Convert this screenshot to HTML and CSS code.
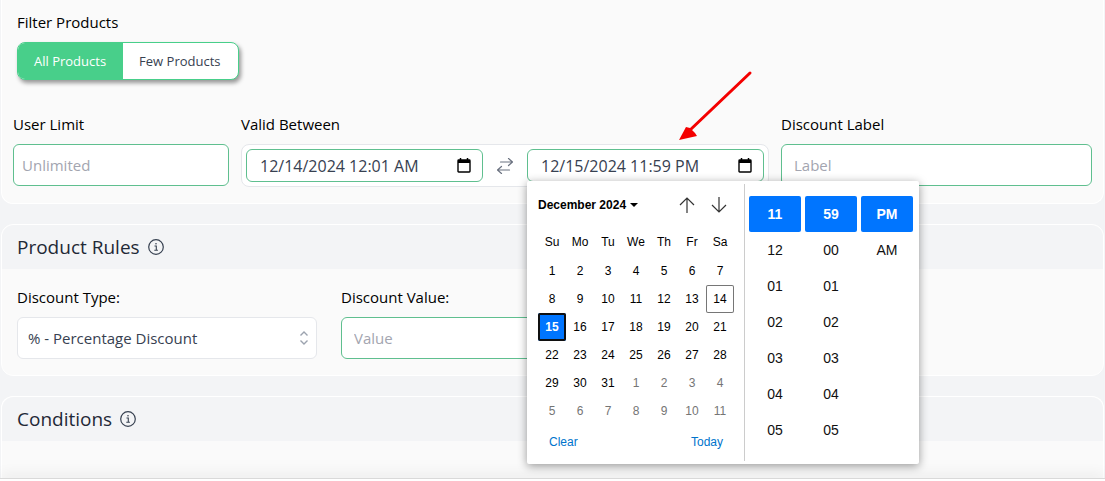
FILE: index.html
```html
<!DOCTYPE html>
<html lang="en">
<head>
<meta charset="utf-8">
<title>Discount</title>
<link rel="stylesheet" href="styles.css">
</head>
<body>
<main class="page">
  <section class="card card-first">
    <div class="filter">
      <span class="label" id="filter-label">Filter Products</span>
      <div class="toggle" role="group" aria-labelledby="filter-label">
        <button type="button" class="toggle-btn active" aria-pressed="true">All Products</button>
        <button type="button" class="toggle-btn" aria-pressed="false">Few Products</button>
      </div>
    </div>
    <div class="limits">
      <div class="field">
        <label class="label" for="limit">User Limit</label>
        <input class="input input-tight" id="limit" type="text" placeholder="Unlimited">
      </div>
      <div class="field">
        <label class="label" for="from">Valid Between</label>
        <div class="range">
          <div class="date">
            <input class="date-input" id="from" type="text" value="12/14/2024 12:01 AM">
            <button type="button" class="icon-btn" aria-label="Open start calendar">
              <svg width="14" height="16" viewBox="0 0 14 16"><path d="M3.500 0v3M10.500 0v3" stroke="#000" stroke-width="1.500"/><path d="M1.700 2h10.600q.7 0 .7.700v10.600q0 .7-.7.700H1.700q-.7 0-.7-.7V2.700Q1 2 1.700 2z" fill="none" stroke="#000" stroke-width="1.400"/><path d="M1 2h12v3H1z"/></svg>
            </button>
          </div>
          <svg class="swap" width="16" height="16" viewBox="0 0 16 16" fill="none" stroke="#6b7280" stroke-width="1.200" stroke-linecap="round" stroke-linejoin="round"><path d="M3.500 4h12M11.500.5l4 3.500-4 3.500M12.500 12H.5M4.500 8.500l-4 3.500 4 3.500"/></svg>
          <div class="date">
            <input class="date-input" id="to" type="text" value="12/15/2024 11:59 PM" aria-label="Valid until">
            <button type="button" class="icon-btn" aria-label="Open end calendar">
              <svg width="14" height="16" viewBox="0 0 14 16"><path d="M3.500 0v3M10.500 0v3" stroke="#000" stroke-width="1.500"/><path d="M1.700 2h10.600q.7 0 .7.700v10.600q0 .7-.7.700H1.700q-.7 0-.7-.7V2.700Q1 2 1.700 2z" fill="none" stroke="#000" stroke-width="1.400"/><path d="M1 2h12v3H1z"/></svg>
            </button>
            <svg class="pointer" width="76" height="72" viewBox="0 0 76 72"><path d="M73 3L12 61" stroke="#f40000" stroke-width="3" stroke-linecap="round"/><path d="M2 70l7-13 4 1 5 5 2 3z" fill="#f40000"/></svg>
            <div class="picker">
              <div class="calendar">
                <div class="cal-head">
                  <button type="button" class="month">December 2024 <svg width="8" height="4" viewBox="0 0 8 4"><path d="M0 0h8L4 4z"/></svg></button>
                  <button type="button" class="nav" aria-label="Previous month"><svg width="16" height="16" viewBox="0 0 16 16" fill="none" stroke="#333" stroke-width="1.200"><path d="M8 16V1M1 8l7-7 7 7"/></svg></button>
                  <button type="button" class="nav" aria-label="Next month"><svg width="16" height="16" viewBox="0 0 16 16" fill="none" stroke="#333" stroke-width="1.200"><path d="M8 0v15M1 8l7 7 7-7"/></svg></button>
                </div>
                <table class="days">
                  <thead><tr><th>Su</th><th>Mo</th><th>Tu</th><th>We</th><th>Th</th><th>Fr</th><th>Sa</th></tr></thead>
                  <tbody>
                    <tr><td>1</td><td>2</td><td>3</td><td>4</td><td>5</td><td>6</td><td>7</td></tr>
                    <tr><td>8</td><td>9</td><td>10</td><td>11</td><td>12</td><td>13</td><td class="today">14</td></tr>
                    <tr><td class="selected">15</td><td>16</td><td>17</td><td>18</td><td>19</td><td>20</td><td>21</td></tr>
                    <tr><td>22</td><td>23</td><td>24</td><td>25</td><td>26</td><td>27</td><td>28</td></tr>
                    <tr><td>29</td><td>30</td><td>31</td><td class="other">1</td><td class="other">2</td><td class="other">3</td><td class="other">4</td></tr>
                    <tr><td class="other">5</td><td class="other">6</td><td class="other">7</td><td class="other">8</td><td class="other">9</td><td class="other">10</td><td class="other">11</td></tr>
                  </tbody>
                </table>
                <div class="cal-foot">
                  <button type="button" class="text-btn">Clear</button>
                  <button type="button" class="text-btn">Today</button>
                </div>
              </div>
              <div class="times">
                <div class="time-col">
                  <button type="button" class="time active">11</button><button type="button" class="time">12</button><button type="button" class="time">01</button><button type="button" class="time">02</button><button type="button" class="time">03</button><button type="button" class="time">04</button><button type="button" class="time">05</button>
                </div>
                <div class="time-col">
                  <button type="button" class="time active">59</button><button type="button" class="time">00</button><button type="button" class="time">01</button><button type="button" class="time">02</button><button type="button" class="time">03</button><button type="button" class="time">04</button><button type="button" class="time">05</button>
                </div>
                <div class="time-col">
                  <button type="button" class="time active">PM</button><button type="button" class="time">AM</button>
                </div>
              </div>
            </div>
          </div>
        </div>
      </div>
      <div class="field">
        <label class="label" for="dlabel">Discount Label</label>
        <input class="input" id="dlabel" type="text" placeholder="Label">
      </div>
    </div>
  </section>

  <section class="card">
    <h2 class="card-title">Product Rules
      <svg width="16" height="16" viewBox="0 0 16 16" fill="none" stroke="#374151"><circle cx="8" cy="8" r="7.300" stroke-width="1.200"/><path d="M6.500 7h1.800v4M6.300 11.300h3.600" stroke-width="1.100"/><circle cx="8" cy="4.700" r=".8" fill="#374151" stroke="none"/></svg>
    </h2>
    <div class="rules">
      <div class="field">
        <label class="label" for="dtype">Discount Type:</label>
        <div class="select-wrap">
          <select class="input select" id="dtype"><option>% - Percentage Discount</option></select>
          <svg class="chevrons" width="8" height="14" viewBox="0 0 8 14" fill="none" stroke="#9ca3af" stroke-width="1.400"><path d="M.5 4.500L4 1l3.500 3.500M.5 9.500L4 13l3.500-3.500"/></svg>
        </div>
      </div>
      <div class="field">
        <label class="label" for="dvalue">Discount Value:</label>
        <input class="input" id="dvalue" type="text" placeholder="Value">
      </div>
    </div>
  </section>

  <section class="card card-last">
    <h2 class="card-title">Conditions
      <svg width="16" height="16" viewBox="0 0 16 16" fill="none" stroke="#374151"><circle cx="8" cy="8" r="7.300" stroke-width="1.200"/><path d="M6.500 7h1.800v4M6.300 11.300h3.600" stroke-width="1.100"/><circle cx="8" cy="4.700" r=".8" fill="#374151" stroke="none"/></svg>
    </h2>
  </section>
</main>
<footer class="bottom-bar"></footer>
</body>
</html>
```
FILE: styles.css
```css
* { box-sizing: border-box; }
body {
  margin: 0;
  min-height: 100vh;
  display: flex;
  flex-direction: column;
  background: #f3f4f6;
  color: #000;
  font: 15px/24px "Open Sans", "Noto Sans", sans-serif;
}
button, input, select { font: inherit; color: inherit; margin: 0; }
button { border: 0; padding: 0; background: none; cursor: pointer; }
svg { display: block; flex: none; }

.page {
  flex: 1;
  display: flex;
  flex-direction: column;
  gap: 20px;
  padding: 0 1px;
}
.card {
  border: 1px solid #fff;
  border-radius: 12px;
  background: #fafafa;
}
.card-first {
  border-top: 0;
  border-radius: 0 0 12px 12px;
  padding: 10px 11px 16px;
}
.card-last {
  flex: 1;
  border-bottom: 0;
  border-radius: 12px 12px 0 0;
}
.card-title {
  display: flex;
  align-items: center;
  gap: 8px;
  height: 44px;
  margin: 0;
  padding: 0 15px;
  border-radius: 12px 12px 0 0;
  background: #f3f4f6;
  color: #1f2937;
  font-size: 19px;
  font-weight: 400;
}
.label { display: block; }

.filter { padding: 0 4px; margin-bottom: 32px; }
.toggle {
  display: inline-flex;
  height: 38px;
  margin-top: 8px;
  border: 1px solid #48cf8a;
  border-radius: 8px;
  background: #fff;
  overflow: hidden;
  box-shadow: 2px 3px 4px rgba(0, 0, 0, .4);
  vertical-align: top;
}
.toggle-btn { padding: 0 17px 0 16px; font-size: 13px; color: #374151; }
.toggle-btn.active { background: #48cf8a; color: #fff; }

.limits {
  display: grid;
  grid-template-columns: 216fr 528fr 311fr;
  gap: 12px;
}
.field { display: flex; flex-direction: column; gap: 8px; min-width: 0; }
.input {
  width: 100%;
  height: 42px;
  padding: 0 12px;
  border: 1px solid #5fbf8f;
  border-radius: 6px;
  background: #fff;
  color: #374151;
  outline: 0;
}
.input-tight { padding: 0 8px; }
.input::placeholder { color: #a3a5b0; opacity: 1; }

.range {
  display: flex;
  align-items: center;
  padding: 4px;
  border: 1px solid #e5e7eb;
  border-radius: 8px;
  background: #fff;
}
.date {
  position: relative;
  flex: 1;
  min-width: 0;
  display: flex;
  align-items: center;
  height: 33px;
  padding: 0 11px 0 13px;
  border: 1px solid #5fbf8f;
  border-radius: 6px;
}
.date-input {
  flex: 1;
  min-width: 0;
  padding: 0;
  border: 0;
  outline: 0;
  background: none;
  color: #374151;
  font-size: 16px;
}
.swap { margin: 0 14px; }
.pointer { position: absolute; left: 149px; bottom: 39px; pointer-events: none; }

.picker {
  position: absolute;
  z-index: 2;
  top: 100%;
  left: -1px;
  display: flex;
  width: 392px;
  padding: 3px 0;
  border-radius: 2px;
  background: #fff;
  box-shadow: 0 2px 10px rgba(0, 0, 0, .4);
  font: 12px/28px "Liberation Sans", Arial, sans-serif;
}
.calendar { width: 218px; padding: 5px 9px 5px 11px; border-right: 1px solid #ccc; }
.cal-head { display: flex; align-items: center; height: 32px; }
.month {
  display: flex;
  align-items: center;
  gap: 4px;
  margin-right: auto;
  font-weight: 700;
  font-size: 12px;
}
.nav { display: grid; place-items: center; width: 32px; height: 32px; }
.days { margin-top: 6px; border-collapse: collapse; table-layout: fixed; width: 196px; }
.days th, .days td {
  width: 28px;
  height: 28px;
  padding: 0;
  text-align: center;
  font-weight: 400;
  line-height: 24px;
}
.days th { height: 30px; }
.days .other { color: #757575; }
.days .today { box-shadow: inset 0 0 0 1px #767676; border-radius: 2px; }
.days .selected {
  background: #0075ff;
  color: #fff;
  font-weight: 700;
  box-shadow: inset 0 0 0 2px #101010;
  border-radius: 2px;
}
.cal-foot { display: flex; justify-content: space-between; padding: 3px 12px 0 11px; }
.text-btn { color: #0074cc; }

.times { display: flex; gap: 4px; padding: 12px 5px 0 4px; }
.time-col { display: flex; flex-direction: column; width: 52px; }
.time { height: 36px; border-radius: 2px; font-size: 14px; color: #101010; }
.time.active { background: #0075ff; color: #fff; font-weight: 700; }

.rules {
  display: grid;
  grid-template-columns: 300px 300px;
  gap: 24px;
  padding: 16px 15px;
}
.select-wrap { position: relative; }
.select { display: block; appearance: none; padding: 0 10px; border-color: #e5e7eb; }
.chevrons { position: absolute; right: 9px; top: 14px; pointer-events: none; }

.bottom-bar {
  height: 3px;
  border-top: 1px solid #d9d9d9;
  background: #fff;
  box-shadow: 0 -1px 14px rgba(0, 0, 0, .2);
}
```
